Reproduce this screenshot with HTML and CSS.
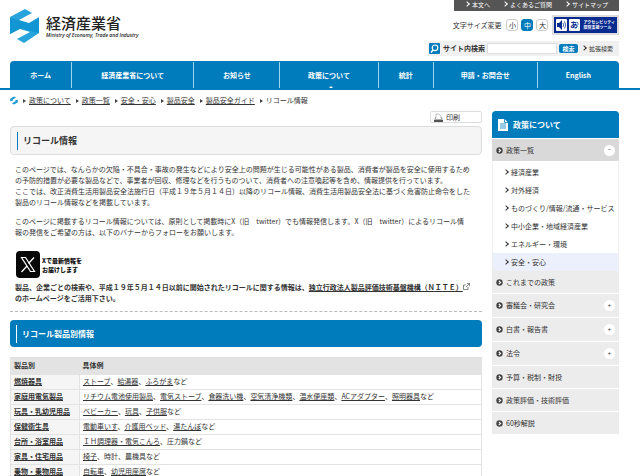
FILE: index.html
```html
<!DOCTYPE html>
<html lang="ja">
<head>
<meta charset="utf-8">
<title>リコール情報 | 経済産業省</title>
<link rel="stylesheet" href="styles.css">
</head>
<body>
<svg width="0" height="0" class="defs" aria-hidden="true">
  <symbol id="mark" viewBox="0 0 29 34">
    <path d="M0 8L15 0l7 4-13 7 10 3 10-6v16L14 34l-7-4 13-7-10-3-10 5z" fill="#27a4dc"/>
    <path d="M0 9l9 2.500 10 3L29 9v15l-9-2-10-2.500L0 25z" fill="#1296d3"/>
  </symbol>
  <symbol id="bullet" viewBox="0 0 7 7">
    <circle cx="3.5" cy="3.5" r="3.2" fill="#444"/>
    <path d="M2.8 1.9l1.8 1.6-1.8 1.6" fill="none" stroke="#fff" stroke-width="1.1"/>
  </symbol>
</svg>
<header class="header">
  <a class="logo" href="#">
    <svg class="logo-mark" aria-hidden="true"><use href="#mark"/></svg>
    <span class="logo-text"><span class="logo-name">経済産業省</span><span class="logo-sub">Ministry of Economy, Trade and Industry</span></span>
  </a>
  <div class="tools">
    <nav class="topbar"><a href="#">本文へ</a><a href="#">よくあるご質問</a><a href="#">サイトマップ</a></nav>
    <div class="sizes">
      <span class="sizes-label">文字サイズ変更</span>
      <button type="button">小</button><button type="button" class="on">中</button><button type="button">大</button>
      <a class="access" href="#">
        <svg viewBox="0 0 24 12" aria-hidden="true">
          <rect width="11" height="12" rx="1" fill="#fff"/><path d="M1 4h2l3-3v10L3 8H1z" fill="#082b8f"/><path d="M7 4q1.500 2 0 4M8.500 2.500q2.500 3.500 0 7" fill="none" stroke="#082b8f" stroke-width=".7"/>
          <rect x="13" width="11" height="12" rx="1" fill="#fff"/><text x="14" y="9" class="access-glyph">あ</text><path d="M21 3q1.500 1 1 3" fill="none" stroke="#082b8f" stroke-width=".7"/>
        </svg>
        <span>アクセシビリティ<br>閲覧支援ツール</span>
      </a>
    </div>
    <form class="search">
      <svg viewBox="0 0 11 11" aria-hidden="true"><rect width="11" height="11" rx="1" fill="#007bbb"/><circle cx="6" cy="4.800" r="2.800" fill="none" stroke="#fff" stroke-width="1.200"/><path d="M4 7L2 9.500" stroke="#fff" stroke-width="1.500"/></svg>
      <label for="q">サイト内検索</label>
      <input id="q" type="text">
      <button type="submit">検索</button>
      <a href="#">拡張検索</a>
    </form>
  </div>
</header>
<nav class="gnav">
  <ul>
    <li class="w-home"><a href="#">ホーム</a></li>
    <li class="w-about"><a href="#">経済産業省について</a></li>
    <li class="w-news"><a href="#">お知らせ</a></li>
    <li class="w-policy current"><a href="#">政策について</a></li>
    <li class="w-stats"><a href="#">統計</a></li>
    <li class="w-contact"><a href="#">申請・お問合せ</a></li>
    <li class="w-english"><a href="#">English</a></li>
  </ul>
</nav>
<nav class="crumbs">
  <svg viewBox="0 0 29 34" aria-hidden="true"><path d="M0 20V10L14 2l8 4-14 9 3 3zM29 14v10l-14 8-8-4 14-9-3-3z" fill="#189bd7"/></svg>
  <ol>
    <li><a href="#">政策について</a></li>
    <li><a href="#">政策一覧</a></li>
    <li><a href="#">安全・安心</a></li>
    <li><a href="#">製品安全</a></li>
    <li><a href="#">製品安全ガイド</a></li>
    <li>リコール情報</li>
  </ol>
</nav>
<div class="columns">
  <main>
    <button type="button" class="print">
      <svg viewBox="0 0 9 9" aria-hidden="true"><path d="M2 5V1h3l2 2v2" fill="#fff" stroke="#999" stroke-width=".6"/><path d="M1 4h1v2h5V4h1l1 4H0z" fill="#aaa"/><path d="M0 7h9v2H0z" fill="#555"/></svg>
      印刷</button>
    <h1>リコール情報</h1>
    <div class="body">
      <p>このページでは、なんらかの欠陥・不具合・事故の発生などにより安全上の問題が生じる可能性がある製品、消費者が製品を安全に使用するための予防的措置が必要な製品などで、事業者が回収、修理などを行うものついて、消費者への注意喚起等を含め、情報提供を行っています。<br>ここでは、改正消費生活用製品安全法施行日（平成１９年５月１４日）以降のリコール情報、消費生活用製品安全法に基づく危害防止命令をした製品のリコール情報などを掲載しています。</p>
      <p>このページに掲載するリコール情報については、原則として掲載時にX（旧　twitter）でも情報発信します。X（旧　twitter）によるリコール情<br>報の発信をご希望の方は、以下のバナーからフォローをお願いします。</p>
      <a class="xbanner" href="#">
        <svg viewBox="0 0 24 27" aria-hidden="true"><rect width="24" height="27" rx="4" fill="#080808"/><path d="M5.500 6.500h4l9 14h-4z" fill="none" stroke="#fff" stroke-width="1.200"/><path d="M18 6.500l-5.500 6M11 15l-5.500 6" stroke="#fff" stroke-width="1.300"/></svg>
        <span>Xで最新情報を<br>お届けします</span>
      </a>
      <p class="strong">製品、企業ごとの検索や、平成１９年５月１４日以前に開始されたリコールに関する情報は、<a href="#">独立行政法人製品評価技術基盤機構（ＮＩＴＥ）<svg viewBox="0 0 7 7" aria-hidden="true"><path d="M3 2H.5v4.500H5V4M4 .5h2.500V3M6.500.5L3 4" fill="none" stroke="#555" stroke-width=".7"/></svg></a><br>のホームページをご活用下さい。</p>
    </div>
    <h2>リコール製品別情報</h2>
    <table>
      <thead><tr><th scope="col">製品別</th><th scope="col">具体例</th></tr></thead>
      <tbody>
        <tr><th scope="row"><a href="#">燃焼器具</a></th><td><a href="#">ストーブ</a>、<a href="#">給湯器</a>、<a href="#">ふろがま</a>など</td></tr>
        <tr><th scope="row"><a href="#">家庭用電気製品</a></th><td><a href="#">リチウム電池使用製品</a>、<a href="#">電気ストーブ</a>、<a href="#">食器洗い機</a>、<a href="#">空気清浄機類</a>、<a href="#">温水便座類</a>、<a href="#">ACアダプター</a>、<a href="#">照明器具</a>など</td></tr>
        <tr><th scope="row"><a href="#">玩具・乳幼児用品</a></th><td><a href="#">ベビーカー</a>、<a href="#">玩具</a>、<a href="#">子供服</a>など</td></tr>
        <tr><th scope="row"><a href="#">保健衛生具</a></th><td><a href="#">電動車いす</a>、<a href="#">介護用ベッド</a>、<a href="#">湯たんぽ</a>など</td></tr>
        <tr><th scope="row"><a href="#">台所・浴室用品</a></th><td><a href="#">ＩＨ調理器・電気こんろ</a>、圧力鍋など</td></tr>
        <tr><th scope="row"><a href="#">家具・住宅用品</a></th><td><a href="#">椅子</a>、時計、農機具など</td></tr>
        <tr><th scope="row"><a href="#">乗物・乗物用品</a></th><td><a href="#">自転車</a>、<a href="#">幼児用座席</a>など</td></tr>
      </tbody>
    </table>
  </main>
  <aside>
    <h2 class="side-title"><svg viewBox="0 0 10 12" aria-hidden="true"><path d="M0 0h6.500L10 3.500V12H0z" fill="#fff"/><path d="M6.500 0v3.500H10M2 5h6M2 7h6M2 9h6" fill="none" stroke="#007bbb" stroke-width=".8"/></svg>政策について</h2>
    <ul class="side">
      <li class="open"><div class="row"><svg aria-hidden="true"><use href="#bullet"/></svg><a href="#">政策一覧</a><button type="button" aria-label="閉じる">−</button></div>
        <ul class="sub">
          <li><a href="#">経済産業</a></li>
          <li><a href="#">対外経済</a></li>
          <li><a href="#">ものづくり/情報/流通・サービス</a></li>
          <li><a href="#">中小企業・地域経済産業</a></li>
          <li><a href="#">エネルギー・環境</a></li>
          <li class="here"><a href="#">安全・安心</a></li>
        </ul></li>
      <li><div class="row"><svg aria-hidden="true"><use href="#bullet"/></svg><a href="#">これまでの政策</a></div></li>
      <li><div class="row closed"><svg aria-hidden="true"><use href="#bullet"/></svg><a href="#">審議会・研究会</a><button type="button" aria-label="開く">+</button></div></li>
      <li><div class="row closed"><svg aria-hidden="true"><use href="#bullet"/></svg><a href="#">白書・報告書</a><button type="button" aria-label="開く">+</button></div></li>
      <li><div class="row closed"><svg aria-hidden="true"><use href="#bullet"/></svg><a href="#">法令</a><button type="button" aria-label="開く">+</button></div></li>
      <li><div class="row"><svg aria-hidden="true"><use href="#bullet"/></svg><a href="#">予算・税制・財投</a></div></li>
      <li><div class="row"><svg aria-hidden="true"><use href="#bullet"/></svg><a href="#">政策評価・技術評価</a></div></li>
      <li><div class="row"><svg aria-hidden="true"><use href="#bullet"/></svg><a href="#">60秒解説</a></div></li>
    </ul>
  </aside>
</div>
</body>
</html>
```
FILE: styles.css
```css
* { box-sizing: border-box; }
body {
  margin: 0;
  background: #fff;
  color: #333;
  font: 7px/11px "Noto Sans CJK JP", sans-serif;
}
ul, ol { list-style: none; margin: 0; padding: 0; }
a { color: inherit; }
button, input { font: inherit; color: inherit; margin: 0; padding: 0; }
.defs { position: absolute; }

.header {
  display: flex;
  justify-content: space-between;
  padding: 0 21px 0 10px;
}
.logo {
  display: flex;
  gap: 7px;
  height: 34px;
  margin-top: 9px;
  color: #222;
  text-decoration: none;
}
.logo-mark { width: 29px; height: 34px; }
.logo-text { display: flex; flex-direction: column; padding-top: 5px; }
.logo-name { font-size: 15px; line-height: 18px; font-weight: 500; }
.logo-sub { font: italic 600 5px/6px "Open Sans", sans-serif; }

.tools { display: flex; flex-direction: column; align-items: flex-end; }
.topbar {
  display: flex;
  gap: 13px;
  height: 11px;
  padding: 0 11px;
  background: #555;
  color: #fff;
  font-size: 6px;
  line-height: 9px;
}
.topbar a { text-decoration: none; }
.topbar a::before, .search a::before, .sub a::before {
  content: "";
  display: inline-block;
  width: 3px;
  height: 3px;
  margin: 0 3px 1px 0;
  border: solid currentColor;
  border-width: 1px 1px 0 0;
  transform: rotate(45deg);
}
.sizes {
  display: flex;
  align-items: center;
  gap: 3px;
  height: 20px;
  margin: 4px 0 6px;
}
.sizes-label { margin-right: 2px; }
.sizes button {
  width: 12px;
  height: 12px;
  border: 1px solid #ccc;
  border-radius: 3px;
  background: #fff;
  line-height: 10px;
}
.sizes .on { background: #007bbb; border-color: #007bbb; color: #fff; }
.access {
  display: flex;
  align-items: center;
  gap: 3px;
  height: 20px;
  margin-left: 1px;
  padding: 0 2px;
  border: 2px solid #ddd;
  background: #082b8f;
  color: #fff;
  font-size: 4px;
  line-height: 5px;
  font-weight: 700;
  text-decoration: none;
}
.access svg { width: 24px; height: 12px; }
.access-glyph { font-size: 8px; fill: #082b8f; }
.search {
  display: flex;
  align-items: center;
  height: 15px;
  padding: 0 6px 0 1px;
  background: #f0f0f0;
}
.search svg { width: 11px; height: 11px; margin-right: 3px; }
.search label { font-weight: 700; }
.search input {
  width: 70px;
  height: 11px;
  margin: 0 2px;
  border: 1px solid #ddd;
  background: #fff;
}
.search button {
  width: 19px;
  height: 9px;
  border: 0;
  border-radius: 2px;
  background: #007bbb;
  color: #fff;
  font-size: 6px;
  line-height: 9px;
  font-weight: 700;
}
.search a { margin-left: 4px; font-size: 6px; text-decoration: none; }

.gnav {
  margin-top: 5px;
  padding: 0 21px 0 10px;
  border-bottom: 2px solid #007bbb;
}
.gnav ul {
  display: flex;
  height: 27px;
  border-radius: 4px 4px 0 0;
  background: #007bbb;
}
.gnav li { position: relative; padding-top: 1px; }
.gnav li + li a { border-left: 1px solid #9fd3ee; }
.gnav a {
  display: block;
  color: #fff;
  font-weight: 700;
  line-height: 26px;
  text-align: center;
  text-decoration: none;
}
.w-home { flex: 61; }
.w-about { flex: 122; }
.w-news { flex: 86; }
.w-policy { flex: 98; }
.w-stats { flex: 55; }
.w-contact { flex: 104; }
.w-english { flex: 82; }
.current::after {
  content: "";
  position: absolute;
  bottom: 0;
  left: 50%;
  border: 2px solid transparent;
  border-top: 0;
  border-bottom-color: #fff;
}

.crumbs {
  display: flex;
  align-items: center;
  gap: 5px;
  height: 20px;
  margin-bottom: 1px;
  padding: 0 10px;
}
.crumbs svg { width: 8px; height: 9px; }
.crumbs ol { display: flex; gap: 5px; }
.crumbs li::before {
  content: "";
  display: inline-block;
  margin-right: 3px;
  border: 2px solid transparent;
  border-left: 3px solid #444;
  border-right: 0;
}

.columns {
  display: grid;
  grid-template-columns: 472fr 127fr;
  gap: 10px;
  align-items: start;
  padding: 0 21px 0 10px;
}
main { display: flex; flex-direction: column; }
.print {
  display: flex;
  align-items: center;
  align-self: flex-end;
  gap: 3px;
  width: 52px;
  height: 12px;
  margin-bottom: 3px;
  padding-left: 3px;
  border: 1px solid #ddd;
  border-radius: 2px;
  background: #fff;
}
.print svg { width: 9px; height: 9px; }
h1, main h2 {
  display: flex;
  align-items: center;
  margin: 0;
  padding-left: 6px;
  border-radius: 4px;
}
h1 {
  height: 29px;
  border: 1px solid #ddd;
  background: #f5f5f5;
  font-size: 9px;
}
h1::before, main h2::before {
  content: "";
  width: 1px;
  height: 18px;
  margin-right: 5px;
  background: #fff;
}
h1::before { background: #007bbb; }
.body {
  padding: 9px 6px 7px 5px;
  border-bottom: 1px dashed #bbb;
}
.body p { margin: 0 0 8px; }
.xbanner {
  display: flex;
  gap: 2px;
  height: 27px;
  margin: 13px 0 4px 1px;
  padding: 0;
  color: #111;
  font-size: 6px;
  line-height: 9px;
  font-weight: 900;
  text-decoration: none;
}
.xbanner svg { width: 24px; height: 27px; }
.xbanner span { padding-top: 5px; }
.body .strong { margin: 0; font-weight: 700; }
.strong svg { width: 7px; height: 7px; }
main h2 {
  height: 27px;
  margin: 8px 0 10px;
  background: #007bbb;
  color: #fff;
  font-size: 8px;
}
table {
  width: 100%;
  border: 1px solid #e3e3e3;
  border-top: 0;
  border-collapse: collapse;
}
th, td {
  height: 15px;
  padding: 0 3px;
  border-bottom: 1px solid #e3e3e3;
  text-align: left;
}
th:first-child { width: 69px; }
thead th { height: 17px; background: #e3e3e3; }
tbody th { background: #f5f5f5; white-space: nowrap; border-right: 1px solid #e3e3e3; }

.side-title {
  display: flex;
  align-items: center;
  gap: 5px;
  height: 27px;
  margin: 0 0 1px;
  padding-left: 6px;
  border-radius: 4px 4px 0 0;
  background: #007bbb;
  color: #fff;
  font-size: 8px;
}
.side-title svg { width: 10px; height: 12px; }
.side a { text-decoration: none; }
.row {
  display: flex;
  align-items: center;
  gap: 3px;
  height: 23px;
  padding: 0 4px;
  border-bottom: 1px solid #fff;
  background: #ececec;
}
.closed { height: 24px; }
.row svg { width: 7px; height: 7px; }
.row button {
  width: 11px;
  height: 11px;
  margin-left: auto;
  border: 0;
  border-radius: 50%;
  background: #fff;
  font-size: 6px;
  line-height: 10px;
}
.open .row { background: #d9d9d9; }
.sub { border: solid #eee; border-width: 0 1px; padding-top: 1px; }
.sub li { padding-left: 11px; line-height: 18px; }
.sub .here { background: #ecf0fc; }
```
